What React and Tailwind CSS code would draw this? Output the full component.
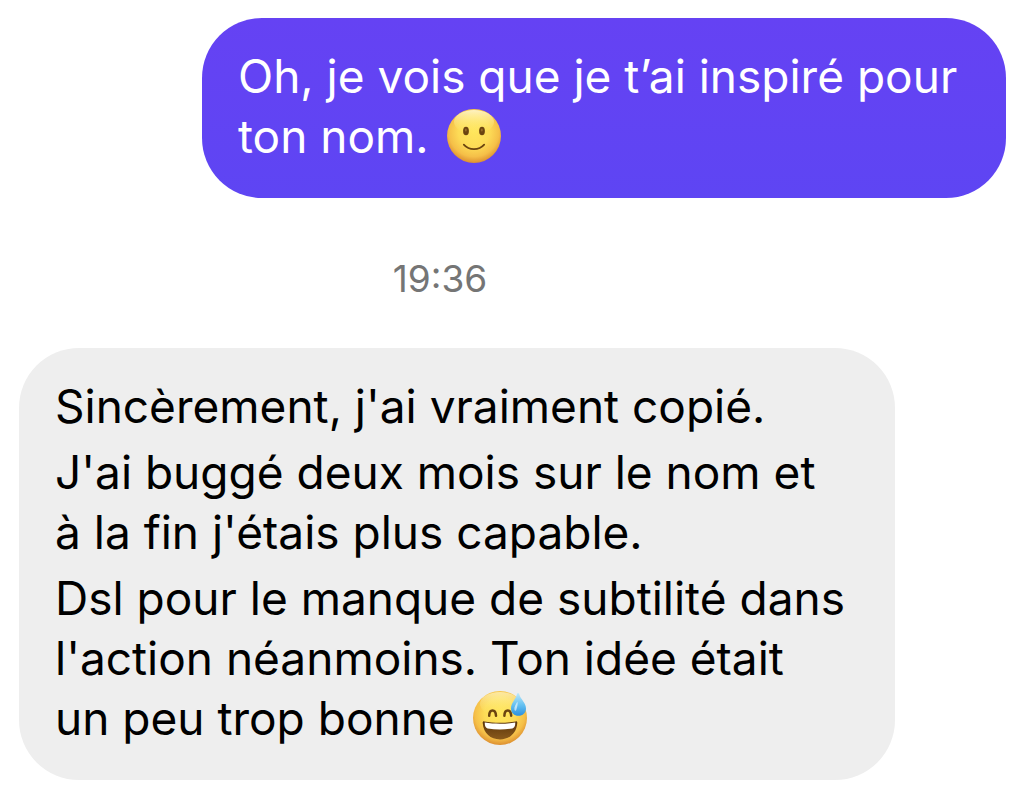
import React from "react";

const SmileEmoji = () => (
  <svg
    viewBox="0 0 56 56"
    role="img"
    aria-label="Slightly smiling face"
    className="inline-block w-14 h-14 ml-1 align-[-11px]"
  >
    <defs>
      <radialGradient id="smile-face" cx="50%" cy="42%" r="58%">
        <stop offset="0%" stopColor="#ffe65c" />
        <stop offset="50%" stopColor="#fddb56" />
        <stop offset="80%" stopColor="#f5bf48" />
        <stop offset="100%" stopColor="#dd8f30" />
      </radialGradient>
      <linearGradient id="smile-shine" x1="0" y1="0" x2="0" y2="1">
        <stop offset="0%" stopColor="#fffce0" stopOpacity="0.8" />
        <stop offset="100%" stopColor="#fff066" stopOpacity="0" />
      </linearGradient>
    </defs>
    <circle cx="28" cy="28" r="27" fill="url(#smile-face)" />
    <ellipse cx="28" cy="14" rx="20" ry="12" fill="url(#smile-shine)" />
    <ellipse cx="20" cy="23" rx="2.9" ry="4.3" fill="#6b4410" />
    <ellipse cx="36" cy="23" rx="2.9" ry="4.3" fill="#6b4410" />
    <ellipse cx="19.8" cy="22" rx="1" ry="1.6" fill="#94692a" />
    <ellipse cx="35.8" cy="22" rx="1" ry="1.6" fill="#94692a" />
    <path
      d="M17.8 36.6C23 42.6 33 42.6 38.2 36.6"
      fill="none"
      stroke="#6b4410"
      strokeWidth="1.7"
      strokeLinecap="round"
    />
  </svg>
);

const SweatEmoji = () => (
  <svg
    viewBox="0 0 56 56"
    role="img"
    aria-label="Grinning face with sweat"
    className="inline-block w-14 h-14 ml-1 align-[-11px]"
  >
    <defs>
      <radialGradient id="sweat-face" cx="50%" cy="42%" r="58%">
        <stop offset="0%" stopColor="#ffe65c" />
        <stop offset="50%" stopColor="#fddb56" />
        <stop offset="80%" stopColor="#f5bf48" />
        <stop offset="100%" stopColor="#dd8f30" />
      </radialGradient>
      <linearGradient id="sweat-shine" x1="0" y1="0" x2="0" y2="1">
        <stop offset="0%" stopColor="#fffce0" stopOpacity="0.6" />
        <stop offset="100%" stopColor="#fff066" stopOpacity="0" />
      </linearGradient>
      <linearGradient id="sweat-mouth" x1="0" y1="0" x2="0" y2="1">
        <stop offset="0%" stopColor="#5a340b" />
        <stop offset="100%" stopColor="#8a5a1c" />
      </linearGradient>
      <linearGradient id="sweat-drop" x1="0" y1="0" x2="0" y2="1">
        <stop offset="0%" stopColor="#bfe9fa" />
        <stop offset="55%" stopColor="#62bff0" />
        <stop offset="100%" stopColor="#2c8fdf" />
      </linearGradient>
    </defs>
    <circle cx="28" cy="28" r="27" fill="url(#sweat-face)" />
    <ellipse cx="28" cy="14" rx="20" ry="12" fill="url(#sweat-shine)" />
    <path
      d="M17.2 25.8C17.4 18.8 23.6 18.8 24 25.8"
      fill="none"
      stroke="#6b4410"
      strokeWidth="2.5"
      strokeLinecap="round"
    />
    <path
      d="M32.4 25.8C32.6 18.8 38.8 18.8 39.2 25.8"
      fill="none"
      stroke="#6b4410"
      strokeWidth="2.5"
      strokeLinecap="round"
    />
    <path
      d="M12.2 31.4C11.2 31.2 10.6 31.9 10.7 33C11.5 43.4 18.6 49.4 28 49.4C37.4 49.4 44.5 43.4 45.3 33C45.4 31.9 44.8 31.2 43.8 31.4C34 33.2 22 33.2 12.2 31.4Z"
      fill="url(#sweat-mouth)"
    />
    <path
      d="M12.8 32.6C22.4 34.2 33.6 34.2 43.2 32.6C43.5 35.6 42.4 38 40.4 38.5C32.4 39.9 23.6 39.9 15.6 38.5C13.6 38 12.5 35.6 12.8 32.6Z"
      fill="#fff"
    />
    <path
      d="M46 3C46.8 3 47.1 3.8 47.5 5C49 9.4 54 13.4 54 18.4C54 22.8 50.6 25.8 46.5 25.8C42.3 25.8 39 22.8 39 18.4C39 13.4 43.4 9.4 44.7 5C45 3.8 45.3 3 46 3Z"
      fill="url(#sweat-drop)"
    />
    <path
      d="M45.4 11.4C44 14.2 42 16.4 42.4 19.4C42.8 21.2 44 21.4 44.4 19.6C44.9 17 46.2 14.4 45.4 11.4Z"
      fill="#fff"
      fillOpacity="0.6"
    />
  </svg>
);

const sentMessages = [
  {
    lines: ["Oh, je vois que je t’ai inspiré pour", "ton nom."],
    emoji: SmileEmoji,
  },
];

const receivedMessages = [
  { lines: ["Sincèrement, j'ai vraiment copié."] },
  {
    lines: [
      "J'ai buggé deux mois sur le nom et",
      "à la fin j'étais plus capable.",
    ],
  },
  {
    lines: [
      "Dsl pour le manque de subtilité dans",
      "l'action néanmoins. Ton idée était",
      "un peu trop bonne",
    ],
    emoji: SweatEmoji,
  },
];

const Bubble = ({ messages, sent = false }) => (
  <div
    className={`flex flex-col gap-1.5 w-full px-9 pt-7 pb-8 rounded-[60px] text-[46px] leading-[60px] ${
      sent
        ? "self-end max-w-[804px] bg-gradient-to-b from-[#6542f3] to-[#5e45f3] text-white"
        : "self-start max-w-[876px] bg-[#eeeeee] text-black"
    }`}
  >
    {messages.map(({ lines, emoji: Emoji }, i) => (
      <p key={i}>
        {lines.map((line, j) => (
          <span key={j} className="block h-[60px] whitespace-nowrap">
            {line}
            {Emoji && j === lines.length - 1 && (
              <>
                {" "}
                <Emoji />
              </>
            )}
          </span>
        ))}
      </p>
    ))}
  </div>
);

const App = () => {
  return (
    <main className="flex flex-col bg-white pt-[18px] pb-5 pl-[19px] pr-[13px] font-['Inter',sans-serif]">
      <Bubble messages={sentMessages} sent />
      <time className="w-full max-w-[842px] pt-[62px] pb-[50px] text-center text-[37px] leading-[38px] text-[#757575]">
        19:36
      </time>
      <Bubble messages={receivedMessages} />
    </main>
  );
};

export default App;
